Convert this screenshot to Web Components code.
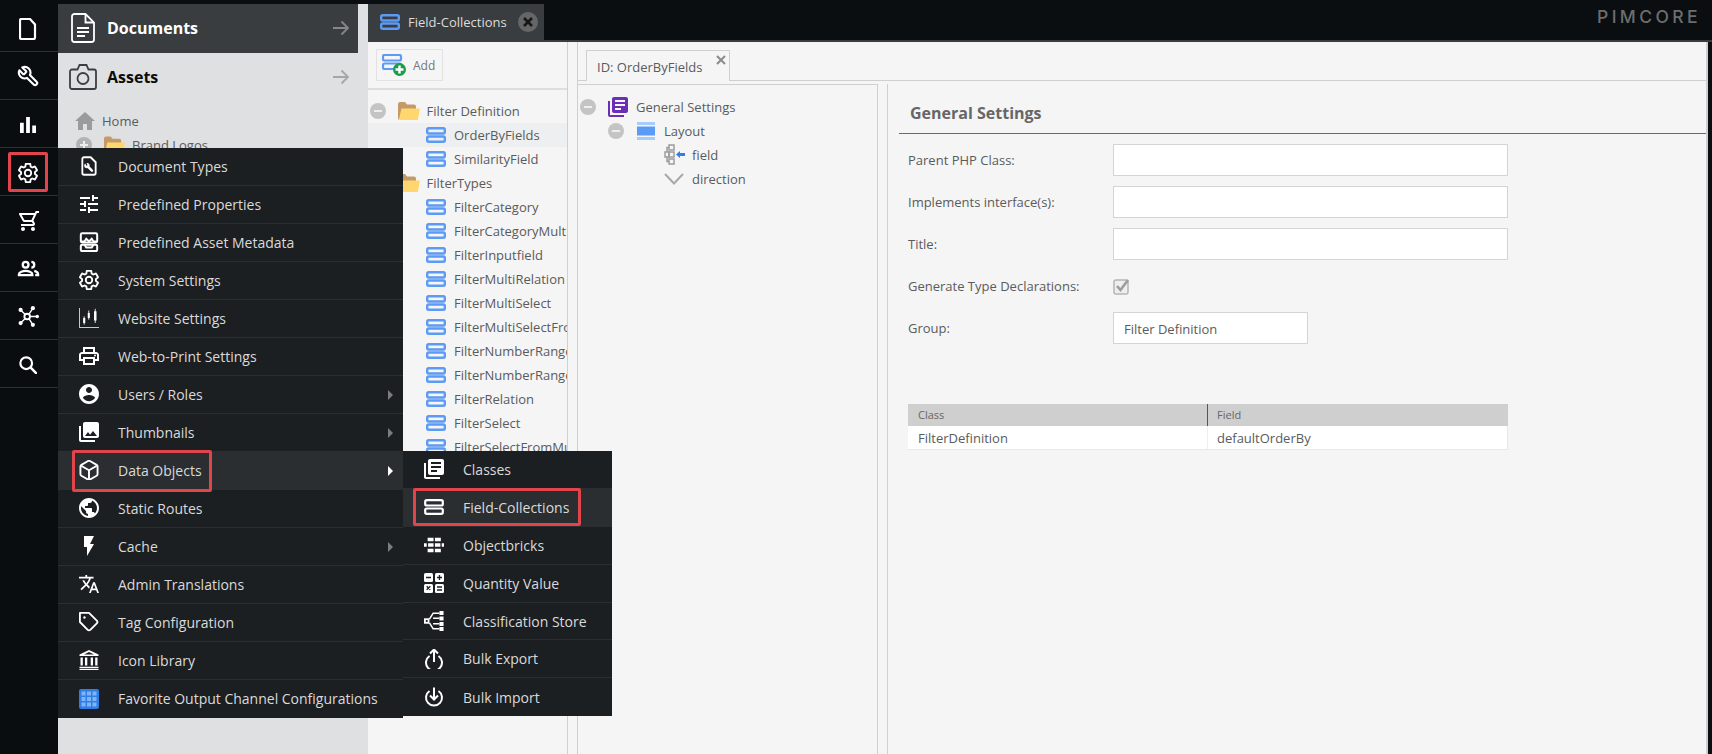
<!DOCTYPE html>
<html lang="en">
<head>
<meta charset="utf-8">
<title>Field-Collections</title>
<style>
  html, body { margin: 0; height: 100%; overflow: hidden; background: #0b0e11; }
  body { font-family: "Open Sans", "DejaVu Sans", sans-serif; font-size: 13px; }
</style>
</head>
<body>
<pim-app>
  <pim-sidebar>
    <pim-side-button icon="file" w="18" h="22"></pim-side-button>
    <pim-side-button icon="wrench" w="23" h="23"></pim-side-button>
    <pim-side-button icon="bars" w="16" h="16"></pim-side-button>
    <pim-side-button icon="gear" w="20" h="20" marked></pim-side-button>
    <pim-side-button icon="cart" w="24" h="24"></pim-side-button>
    <pim-side-button icon="people" w="23" h="23"></pim-side-button>
    <pim-side-button icon="network" w="21" h="21"></pim-side-button>
    <pim-side-button icon="search" w="18" h="18"></pim-side-button>
  </pim-sidebar>

  <pim-accordion>
    <pim-acc-header active icon="doc-lines" w="24" h="30">Documents</pim-acc-header>
    <pim-acc-header icon="camera" w="28" h="26">Assets</pim-acc-header>
    <pim-tree style="--tree-top:7.5px">
      <pim-tree-row at="16.5" text="44" icon="home" icon-w="20" icon-h="18">Home</pim-tree-row>
      <pim-tree-row toggle="plus" toggle-at="18" at="46" text="74" icon="folder" icon-w="21" icon-h="18">Brand Logos</pim-tree-row>
    </pim-tree>
  </pim-accordion>

  <pim-workspace>
    <pim-main-tab slot="tabs" icon="collection">Field-Collections</pim-main-tab>
    <pim-logo slot="tabs">PIMCORE</pim-logo>

    <pim-split>
      <pim-nav-panel slot="nav">
        <pim-tree style="--tree-top:8.5px">
          <pim-tree-row toggle="minus" toggle-at="2" at="30" text="58.5" icon="folder" icon-w="22" icon-h="18">Filter Definition</pim-tree-row>
          <pim-tree-row selected at="58" text="86" icon="collection">OrderByFields</pim-tree-row>
          <pim-tree-row at="58" text="86" icon="collection">SimilarityField</pim-tree-row>
          <pim-tree-row toggle="minus" toggle-at="2" at="30" text="58.5" icon="folder" icon-w="22" icon-h="18">FilterTypes</pim-tree-row>
          <pim-tree-row at="58" text="86" icon="collection">FilterCategory</pim-tree-row>
          <pim-tree-row at="58" text="86" icon="collection">FilterCategoryMultiselect</pim-tree-row>
          <pim-tree-row at="58" text="86" icon="collection">FilterInputfield</pim-tree-row>
          <pim-tree-row at="58" text="86" icon="collection">FilterMultiRelation</pim-tree-row>
          <pim-tree-row at="58" text="86" icon="collection">FilterMultiSelect</pim-tree-row>
          <pim-tree-row at="58" text="86" icon="collection">FilterMultiSelectFromMultiSelect</pim-tree-row>
          <pim-tree-row at="58" text="86" icon="collection">FilterNumberRange</pim-tree-row>
          <pim-tree-row at="58" text="86" icon="collection">FilterNumberRangeSelection</pim-tree-row>
          <pim-tree-row at="58" text="86" icon="collection">FilterRelation</pim-tree-row>
          <pim-tree-row at="58" text="86" icon="collection">FilterSelect</pim-tree-row>
          <pim-tree-row at="58" text="86" icon="collection">FilterSelectFromMultiSelect</pim-tree-row>
        </pim-tree>
      </pim-nav-panel>

      <pim-detail slot="detail" heading="ID: OrderByFields">
        <pim-tree slot="layout" style="--tree-top:9.5px">
          <pim-tree-row toggle="minus" toggle-at="2" at="30" text="58" icon="classes" icon-w="20" icon-h="20" icon-color="#6a2fb4">General Settings</pim-tree-row>
          <pim-tree-row toggle="minus" toggle-at="30" at="59" text="86" icon="layout" icon-w="18" icon-h="18">Layout</pim-tree-row>
          <pim-tree-row at="86" text="114" icon="field-tree" icon-w="21" icon-h="21">field</pim-tree-row>
          <pim-tree-row at="86" text="114" icon="chevron" icon-w="20" icon-h="12">direction</pim-tree-row>
        </pim-tree>
        <pim-settings slot="settings" heading="General Settings">
          <pim-field label="Parent PHP Class:"></pim-field>
          <pim-field label="Implements interface(s):"></pim-field>
          <pim-field label="Title:"></pim-field>
          <pim-field label="Generate Type Declarations:" type="check"></pim-field>
          <pim-field label="Group:" value="Filter Definition" width="195"></pim-field>
          <pim-usage-table class-name="FilterDefinition" field="defaultOrderBy"></pim-usage-table>
        </pim-settings>
      </pim-detail>
    </pim-split>
  </pim-workspace>

  <pim-menu style="--x:58px;--y:147.6px;--w:345px;--row:38px">
    <pim-menu-item icon="doc-wrench">Document Types</pim-menu-item>
    <pim-menu-item icon="tune">Predefined Properties</pim-menu-item>
    <pim-menu-item icon="metadata">Predefined Asset Metadata</pim-menu-item>
    <pim-menu-item icon="gear">System Settings</pim-menu-item>
    <pim-menu-item icon="candles">Website Settings</pim-menu-item>
    <pim-menu-item icon="print">Web-to-Print Settings</pim-menu-item>
    <pim-menu-item icon="user" arrow>Users / Roles</pim-menu-item>
    <pim-menu-item icon="photos" arrow>Thumbnails</pim-menu-item>
    <pim-menu-item icon="cube" arrow active marked style="--mark-l:14px;--mark-w:140px;--mark-t:-2px;--mark-b:-3px">Data Objects</pim-menu-item>
    <pim-menu-item icon="globe">Static Routes</pim-menu-item>
    <pim-menu-item icon="bolt" arrow>Cache</pim-menu-item>
    <pim-menu-item icon="translate">Admin Translations</pim-menu-item>
    <pim-menu-item icon="tag">Tag Configuration</pim-menu-item>
    <pim-menu-item icon="bank">Icon Library</pim-menu-item>
    <pim-menu-item icon="grid" last>Favorite Output Channel Configurations</pim-menu-item>
  </pim-menu>

  <pim-menu style="--x:403px;--y:451px;--w:209px;--row:37.9px">
    <pim-menu-item icon="classes">Classes</pim-menu-item>
    <pim-menu-item icon="rows" active marked style="--mark-l:10px;--mark-w:168px;--mark-t:-1px;--mark-b:0px">Field-Collections</pim-menu-item>
    <pim-menu-item icon="bricks">Objectbricks</pim-menu-item>
    <pim-menu-item icon="calc">Quantity Value</pim-menu-item>
    <pim-menu-item icon="hierarchy">Classification Store</pim-menu-item>
    <pim-menu-item icon="export">Bulk Export</pim-menu-item>
    <pim-menu-item icon="import" last>Bulk Import</pim-menu-item>
  </pim-menu>
</pim-app>

<script>
// icon bodies, keyed by name: [viewBox, markup]
const GEAR = "M19.43 12.98c.04-.32.07-.64.07-.98 0-.34-.03-.66-.07-.98l2.11-1.65c.19-.15.24-.42.12-.64l-2-3.46c-.12-.22-.39-.3-.61-.22l-2.49 1c-.52-.4-1.08-.73-1.69-.98l-.38-2.65C14.46 2.18 14.25 2 14 2h-4c-.25 0-.46.18-.49.42l-.38 2.65c-.61.25-1.17.59-1.69.98l-2.49-1c-.23-.09-.49 0-.61.22l-2 3.46c-.13.22-.07.49.12.64l2.11 1.65c-.04.32-.07.65-.07.98 0 .33.03.66.07.98l-2.11 1.65c-.19.15-.24.42-.12.64l2 3.46c.12.22.39.3.61.22l2.49-1c.52.4 1.08.73 1.69.98l.38 2.65c.03.24.24.42.49.42h4c.25 0 .46-.18.49-.42l.38-2.65c.61-.25 1.17-.59 1.69-.98l2.49 1c.23.09.49 0 .61-.22l2-3.46c.12-.22.07-.49-.12-.64l-2.11-1.65zM12 15.5c-1.93 0-3.5-1.57-3.5-3.5s1.57-3.5 3.5-3.5 3.5 1.57 3.5 3.5-1.57 3.5-3.5 3.5z";
const ROWS = (color, width) => `<g fill="none" stroke="${color}" stroke-width="${width}"><rect x="1.200" y="1.200" width="17.600" height="5.300" rx="1.500"/><rect x="1.200" y="9.500" width="17.600" height="5.300" rx="1.500"/></g>`;
const ICONS = {
  file: ["0 0 18 22", `<path d="M2.500 1h8.500l5 5.500v13a1.500 1.500 0 0 1-1.500 1.500h-12a1.500 1.500 0 0 1-1.500-1.500v-17a1.500 1.500 0 0 1 1.500-1.500z" fill="none" stroke="currentColor" stroke-width="2.200"/>`],
  wrench: ["0 0 24 24", `<g transform="matrix(-1 0 0 1 24 0)"><path d="M14.700 6.300a1 1 0 0 0 0 1.400l1.600 1.600a1 1 0 0 0 1.400 0l3.770-3.770a6 6 0 0 1-7.940 7.940l-6.910 6.910a2.120 2.120 0 0 1-3-3l6.910-6.910a6 6 0 0 1 7.940-7.940l-3.760 3.760z" fill="none" stroke="currentColor" stroke-width="2.200" stroke-linejoin="round"/></g>`],
  bars: ["0 0 17 17", `<path fill="currentColor" d="M0 6h4v11H0zM6.500 0h4v17h-4zM13 9h4v8h-4z"/>`],
  gear: ["1.200 1.200 21.600 21.600", `<path d="${GEAR}" fill="none" stroke="currentColor" stroke-width="2"/>`],
  cart: ["0 0 24 24", `<g transform="matrix(-1 0 0 1 24 0)"><path fill="currentColor" d="M15.550 13c.75 0 1.410-.41 1.750-1.030l3.580-6.490A.996.996 0 0 0 20.010 4H5.210l-.94-2H1v2h2l3.600 7.590-1.350 2.440C4.520 15.370 5.480 17 7 17h12v-2H7l1.100-2h7.450zM6.160 6h12.150l-2.760 5H8.530L6.160 6zM7 18c-1.100 0-1.990.9-1.990 2S5.900 22 7 22s2-.9 2-2-.9-2-2-2zm10 0c-1.100 0-1.990.9-1.990 2s.89 2 1.990 2 2-.9 2-2-.9-2-2-2z"/></g>`],
  people: ["0 0 24 24", `<g fill="none" stroke="currentColor" stroke-width="2.400"><circle cx="9" cy="8" r="3"/><path d="M2 19v-1c0-2.300 4.500-3.500 7-3.500s7 1.200 7 3.500v1z"/><path d="M15 5a3 3 0 0 1 0 6"/><path d="M18 14.500c2.200.6 4 1.600 4 3.500v1h-3"/></g>`],
  network: ["0 0 24 24", `<g stroke="currentColor" stroke-width="1.600" fill="none"><circle cx="10.500" cy="12" r="3.200" stroke-width="2.200"/><path d="M3 4.500l5 5M17 2.500l-4.500 7M22 12h-8M17 21.500l-4.500-7M3 19.500l5-5"/></g><g fill="currentColor"><circle cx="3" cy="4.500" r="2.400"/><circle cx="17" cy="2.500" r="2.400"/><circle cx="22" cy="12" r="2"/><circle cx="17" cy="21.500" r="2.400"/><circle cx="3" cy="19.500" r="2.400"/></g>`],
  search: ["0 0 20 20", `<circle cx="8" cy="8" r="6.500" fill="none" stroke="currentColor" stroke-width="2.400"/><path d="M13 13l6 6" stroke="currentColor" stroke-width="2.800" stroke-linecap="round"/>`],
  "doc-lines": ["0 0 24 30", `<path d="M3.500 1h11l8.500 8.500v17a2.500 2.500 0 0 1-2.500 2.500h-17A2.500 2.500 0 0 1 1 26.500v-23A2.500 2.500 0 0 1 3.500 1z" fill="none" stroke="currentColor" stroke-width="1.800"/><path d="M14.500 1v8.500H23" fill="none" stroke="currentColor" stroke-width="1.800"/><path d="M6 15h12M6 19h12M6 23h8" stroke="currentColor" stroke-width="1.800"/>`],
  camera: ["0 0 28 26", `<path d="M3 5.500h5.500l2-4.500h7l2 4.500H25a2 2 0 0 1 2 2V23a2 2 0 0 1-2 2H3a2 2 0 0 1-2-2V7.500a2 2 0 0 1 2-2z" fill="none" stroke="currentColor" stroke-width="1.800"/><circle cx="14" cy="14.500" r="5.500" fill="none" stroke="currentColor" stroke-width="1.800"/>`],
  home: ["0 0 20 18", `<path fill="#9a9b9c" d="M10 0L0 9h3v9h5v-6h4v6h5V9h3z"/>`],
  folder: ["0 0 22 18", `<path fill="#c49b68" d="M0 2a2 2 0 0 1 2-2h5l2 2.500h7a2 2 0 0 1 2 2V16H1.500L0 18z"/><path fill="#ffd76e" d="M3.500 6.500h18.500l-2.200 11.500H.8z"/>`],
  collection: ["0 0 20 16", ROWS("#5b9bf5", 2.400)],
  rows: ["0 0 20 16", ROWS("currentColor", 2.200)],
  "collection-add": ["0 0 24 22", `<g fill="none" stroke="#5b9bf5" stroke-width="2.200"><rect x="1" y="1" width="18" height="5.500" rx="1.500"/><rect x="1" y="9.500" width="18" height="5.500" rx="1.500"/></g><circle cx="17.500" cy="15.500" r="6.500" fill="#1d9a4b"/><path d="M17.500 11.500v8M13.500 15.500h8" stroke="#fff" stroke-width="2.400"/>`],
  classes: ["2 2 20 20", `<path fill="currentColor" d="M4 6H2v14c0 1.100.9 2 2 2h14v-2H4V6zm16-4H8c-1.100 0-2 .9-2 2v12c0 1.100.9 2 2 2h12c1.100 0 2-.9 2-2V4c0-1.100-.9-2-2-2zm-1 9H9V9h10v2zm-4 4H9v-2h6v2zm4-8H9V5h10v2z"/>`],
  layout: ["0 0 18 18", `<path fill="#a9cbfa" d="M0 0h18v3H0zM0 15h18v3H0z"/><path fill="#5b9bf5" d="M0 4.500h18v9H0z"/>`],
  "field-tree": ["0 0 21 21", `<g fill="none" stroke="#9c9c9c" stroke-width="1.500"><rect x="1" y="8" width="4" height="5"/><rect x="5" y="1" width="5" height="5"/><rect x="5" y="8" width="5" height="5"/><rect x="5" y="15" width="5" height="5"/><path d="M3 8V3.500h2M3 13v4.500h2"/></g><path fill="#2f7fe8" d="M12 10.500l4-3.500v2h5v3h-5v2z"/>`],
  chevron: ["0 0 20 12", `<path d="M1 1l9 9.500L19 1" fill="none" stroke="#a8a8a8" stroke-width="2"/>`],
  "doc-wrench": ["0 0 24 24", `<path d="M6 1.500h8l6 6v13a2 2 0 0 1-2 2H6a2 2 0 0 1-2-2v-17a2 2 0 0 1 2-2z" fill="none" stroke="currentColor" stroke-width="2.200"/><path d="M9.500 11.500l6 6" stroke="currentColor" stroke-width="3" stroke-linecap="round"/><circle cx="9.500" cy="11.500" r="3.200" fill="currentColor"/><path d="M9.500 11.500L8 8" stroke="#1c1f22" stroke-width="1.500"/>`],
  tune: ["2 2 20 20", `<path fill="currentColor" d="M3 17v2h6v-2H3zM3 5v2h10V5H3zm10 16v-2h8v-2h-8v-2h-2v6h2zM7 9v2H3v2h4v2h2V9H7zm14 4v-2H11v2h10zm-6-4h2V7h4V5h-4V3h-2v6z"/>`],
  metadata: ["1 1 22 22", `<g fill="none" stroke="currentColor" stroke-width="2.200"><rect x="3" y="2.500" width="18" height="10" rx="1.500"/><rect x="3" y="15" width="18" height="7" rx="1.500"/><path d="M3 11.500h4l2-3 3 3 3-3 2 3h4M7 15l2 3h6l2-3"/></g>`],
  candles: ["0 0 24 24", `<path d="M.5 0v23.500H24" fill="none" stroke="currentColor" stroke-width="1"/><g fill="currentColor"><path d="M5 12h2.500v6H5zM10.500 6h2.500v6h-2.500zM18 4h3v11h-3z"/></g><path d="M6.200 10v10M11.700 3v11M19.500 1v17" stroke="currentColor" stroke-width="1"/>`],
  print: ["2 2 20 20", `<path fill="currentColor" d="M19 8h-1V3H6v5H5c-1.660 0-3 1.340-3 3v6h4v4h12v-4h4v-6c0-1.660-1.340-3-3-3zM8 5h8v3H8V5zm8 12v2H8v-4h8v2zm2-2v-2H6v2H4v-4c0-.55.45-1 1-1h14c.55 0 1 .45 1 1v4h-2z"/><circle cx="18" cy="11.500" r="1" fill="currentColor"/>`],
  user: ["2 2 20 20", `<path fill="currentColor" d="M12 2C6.480 2 2 6.480 2 12s4.480 10 10 10 10-4.480 10-10S17.520 2 12 2zm0 3c1.660 0 3 1.340 3 3s-1.340 3-3 3-3-1.340-3-3 1.340-3 3-3zm0 14.200c-2.500 0-4.710-1.280-6-3.220.03-1.990 4-3.080 6-3.080 1.990 0 5.970 1.090 6 3.080-1.290 1.940-3.500 3.220-6 3.220z"/>`],
  photos: ["2 2 20 20", `<path fill="currentColor" d="M22 16V4c0-1.100-.9-2-2-2H8c-1.100 0-2 .9-2 2v12c0 1.100.9 2 2 2h12c1.100 0 2-.9 2-2zm-11-4l2.030 2.710L16 11l4 5H8l3-4zM2 6v14c0 1.100.9 2 2 2h14v-2H4V6H2z"/>`],
  cube: ["1.500 1.200 21 21", `<g fill="none" stroke="currentColor" stroke-width="2" stroke-linejoin="round"><path d="M21 16V8a2 2 0 0 0-1-1.730l-7-4a2 2 0 0 0-2 0l-7 4A2 2 0 0 0 3 8v8a2 2 0 0 0 1 1.730l7 4a2 2 0 0 0 2 0l7-4A2 2 0 0 0 21 16z"/><path d="M3.270 6.960L12 12.010l8.730-5.050M12 22.080V12"/></g>`],
  globe: ["2 2 20 20", `<path fill="currentColor" d="M12 2C6.480 2 2 6.480 2 12s4.480 10 10 10 10-4.480 10-10S17.520 2 12 2zm-1 17.930c-3.950-.49-7-3.850-7-7.930 0-.62.08-1.210.21-1.790L9 15v1c0 1.100.9 2 2 2v1.930zm6.900-2.540c-.26-.81-1-1.390-1.900-1.390h-1v-3c0-.55-.45-1-1-1H8v-2h2c.55 0 1-.45 1-1V7h2c1.100 0 2-.9 2-2v-.41c2.930 1.190 5 4.060 5 7.410 0 2.080-.8 3.970-2.100 5.390z"/>`],
  bolt: ["2 2 20 20", `<path fill="currentColor" d="M7 2v11h3v9l7-12h-4l4-8z"/>`],
  translate: ["1 2 22 20", `<path fill="currentColor" d="M12.870 15.070l-2.540-2.510.03-.03c1.740-1.940 2.980-4.170 3.710-6.530H17V4h-7V2H8v2H1v1.990h11.170C11.500 7.920 10.440 9.750 9 11.350 8.070 10.320 7.300 9.190 6.690 8h-2c.73 1.630 1.730 3.170 2.980 4.560l-5.090 5.020L4 19l5-5 3.110 3.110.76-2.040zM18.500 10h-2L12 22h2l1.120-3h4.750L21 22h2l-4.500-12zm-2.620 7l1.620-4.330L19.120 17h-3.240z"/>`],
  tag: ["1 1 22 22", `<path d="M20.590 13.410l-7.170 7.170a2 2 0 0 1-2.830 0L2 12V2h10l8.590 8.590a2 2 0 0 1 0 2.820z" fill="none" stroke="currentColor" stroke-width="2" stroke-linejoin="round"/><circle cx="7" cy="7" r="1.300" fill="currentColor"/>`],
  bank: ["0 0 20 20", `<path fill="currentColor" d="M10 0L.5 4.500V6h19V4.500zM10 2l5 2.500H5zM1.500 7.500h2.300v8H1.500zM6 7.500h2.300v8H6zM11.700 7.500H14v8h-2.300zM16.200 7.500h2.300v8h-2.300zM.5 16.800h19v1.300H.5zM.5 18.700h19V20H.5z"/>`],
  grid: ["0 0 20 20", `<rect width="20" height="20" rx="2" fill="#2f7de6"/><g fill="#7fb3f6"><rect x="2.500" y="2.500" width="4" height="4"/><rect x="8" y="2.500" width="4" height="4"/><rect x="13.500" y="2.500" width="4" height="4"/><rect x="2.500" y="8" width="4" height="4"/><rect x="8" y="8" width="4" height="4"/><rect x="13.500" y="8" width="4" height="4"/><rect x="2.500" y="13.500" width="4" height="4"/><rect x="8" y="13.500" width="4" height="4"/><rect x="13.500" y="13.500" width="4" height="4"/></g>`],
  bricks: ["0 0 22 22", `<path fill="currentColor" d="M4 3h6.500v4H4zM12 3h6.500v4H12zM0 9h3v4H0zM4.500 9h6v4h-6zM12 9h6v4h-6zM19.500 9H22v4h-2.500zM4 15h6.500v4H4zM12 15h6.500v4H12z"/>`],
  calc: ["0 0 20 20", `<g fill="currentColor"><rect width="9" height="9" rx="1.500"/><rect x="11" width="9" height="9" rx="1.500"/><rect y="11" width="9" height="9" rx="1.500"/><rect x="11" y="11" width="9" height="9" rx="1.500"/></g><path d="M2 4.500h5M13 4.500h5M15.500 2v5M2.700 13.200l3.600 3.600M6.300 13.200l-3.600 3.600M13 14h5M13 17h5" stroke="#1c1f22" stroke-width="1.300"/>`],
  hierarchy: ["0 0 22 22", `<g fill="currentColor"><path d="M0 8h6v6H0z"/><path d="M17 0h4.500v4.500H17zM17 6h4.500v4.500H17zM17 12h4.500v4.500H17zM17 17.500h4.500V22H17z"/></g><rect x="2" y="10" width="2" height="2" fill="#1c1f22"/><path d="M6 9l4-6.500h7M6 13l4 6.500h7M10 8h7M10 14h7" fill="none" stroke="currentColor" stroke-width="1.600"/>`],
  export: ["2 1 20 20", `<g fill="none" stroke="currentColor" stroke-width="2"><path d="M7.500 8a8 8 0 1 0 9 0"/><path d="M12 14V1.500M8 5.500l4-4 4 4"/></g>`],
  import: ["2 2 20 20", `<g fill="none" stroke="currentColor" stroke-width="2"><path d="M7.500 6a8 8 0 1 0 9 0"/><path d="M12 2.500v12M8 10.500l4 4 4-4"/></g>`],
};

class PimIcon extends HTMLElement {
  constructor() {
    super();
    this.attachShadow({ mode: "open" });
  }

  connectedCallback() {
    const [viewBox, body] = ICONS[this.getAttribute("name")];
    const w = this.getAttribute("w") || 20;
    const h = this.getAttribute("h") || w;
    this.shadowRoot.innerHTML = `
      <style>
        :host { display: inline-flex; flex: none; }
        svg { display: block; }
      </style>
      <svg xmlns="http://www.w3.org/2000/svg" width="${w}" height="${h}" viewBox="${viewBox}">${body}</svg>
    `;
  }
}

class PimApp extends HTMLElement {
  constructor() {
    super();
    this.attachShadow({ mode: "open" });
    this.shadowRoot.innerHTML = `
      <style>
        :host {
          display: grid;
          grid-template-columns: 58px 310px 1fr;
          height: 100vh;
          position: relative;
          overflow: hidden;
          background: #0b0e11;
        }
      </style>
      <slot></slot>
    `;
  }
}

class PimSidebar extends HTMLElement {
  constructor() {
    super();
    this.attachShadow({ mode: "open" });
    this.shadowRoot.innerHTML = `
      <style>
        :host {
          display: flex;
          flex-direction: column;
          padding-top: 4px;
          background: #0a0d10;
        }
      </style>
      <slot></slot>
    `;
  }
}

class PimSideButton extends HTMLElement {
  constructor() {
    super();
    this.attachShadow({ mode: "open" });
  }

  connectedCallback() {
    this.shadowRoot.innerHTML = `
      <style>
        :host {
          display: flex;
          align-items: center;
          justify-content: center;
          position: relative;
          height: 48px;
          box-sizing: border-box;
          padding: 2px 2px 0 0;
          border-bottom: 1px solid #2c3033;
          color: #fff;
        }
        :host([marked])::after {
          content: "";
          position: absolute;
          left: 8px;
          right: 10px;
          top: 4px;
          bottom: 3px;
          border: 3px solid #e2444c;
          border-radius: 2px;
        }
      </style>
      <pim-icon name="${this.getAttribute("icon")}" w="${this.getAttribute("w")}" h="${this.getAttribute("h")}"></pim-icon>
    `;
  }
}

class PimAccordion extends HTMLElement {
  constructor() {
    super();
    this.attachShadow({ mode: "open" });
    this.shadowRoot.innerHTML = `
      <style>
        :host {
          display: block;
          background: #dfe0e2;
          border-top: 4px solid #0b0e11;
          overflow: hidden;
        }
      </style>
      <slot></slot>
    `;
  }
}

class PimAccHeader extends HTMLElement {
  constructor() {
    super();
    this.attachShadow({ mode: "open" });
  }

  connectedCallback() {
    const active = this.hasAttribute("active");
    this.shadowRoot.innerHTML = `
      <style>
        :host {
          display: flex;
          align-items: center;
          box-sizing: border-box;
          width: 300px;
          height: 48.500px;
          padding-left: ${active ? 13 : 11}px;
          font-size: 16px;
          font-weight: 700;
          color: ${active ? "#fff" : "#0c0c0c"};
          background: ${active ? "#3a3d40" : "transparent"};
        }
        .label { flex: 1; margin-left: ${active ? 12 : 10}px; }
        pim-icon { color: ${active ? "#fff" : "#3c3f42"}; }
        svg { margin-right: 9px; display: block; }
      </style>
      <pim-icon name="${this.getAttribute("icon")}" w="${this.getAttribute("w")}" h="${this.getAttribute("h")}"></pim-icon>
      <span class="label"><slot></slot></span>
      <svg width="16" height="16" viewBox="0 0 16 16" fill="none" stroke="${active ? "#85878a" : "#a5a6a8"}" stroke-width="1.800"><path d="M0 8h15M8.500 1.500L15 8l-6.500 6.500"/></svg>
    `;
  }
}

class PimTree extends HTMLElement {
  constructor() {
    super();
    this.attachShadow({ mode: "open" });
    this.shadowRoot.innerHTML = `
      <style>
        :host {
          display: block;
          padding-top: var(--tree-top, 0);
          overflow: hidden;
        }
      </style>
      <slot></slot>
    `;
  }
}

class PimTreeRow extends HTMLElement {
  constructor() {
    super();
    this.attachShadow({ mode: "open" });
  }

  connectedCallback() {
    const at = parseFloat(this.getAttribute("at"));
    const textAt = parseFloat(this.getAttribute("text"));
    const toggle = this.getAttribute("toggle");
    const toggleAt = this.getAttribute("toggle-at") || 0;
    const iconColor = this.getAttribute("icon-color") || "inherit";
    const mark = toggle === "plus"
      ? `<path d="M4 8h8M8 4v8" stroke="#eee" stroke-width="2"/>`
      : `<path d="M4 8h8" stroke="#eee" stroke-width="2"/>`;
    this.shadowRoot.innerHTML = `
      <style>
        :host {
          display: flex;
          align-items: center;
          height: 24px;
          font-size: 13px;
          color: #595b5d;
          white-space: nowrap;
          background: var(--row-bg, transparent);
        }
        :host([selected]) { background: #eeeff1; }
        .lead { flex: none; display: flex; width: ${at}px; box-sizing: border-box; padding-left: ${toggleAt}px; }
        .icon { flex: none; display: flex; align-items: center; width: ${textAt - at}px; color: ${iconColor}; }
        svg { display: block; }
      </style>
      <span class="lead">${toggle ? `<svg width="16" height="16" viewBox="0 0 16 16"><circle cx="8" cy="8" r="8" fill="${toggle === "plus" ? "#b2b3b5" : "#c4c4c4"}"/>${mark}</svg>` : ""}</span>
      <span class="icon"><pim-icon name="${this.getAttribute("icon")}" w="${this.getAttribute("icon-w") || 20}" h="${this.getAttribute("icon-h") || 16}"></pim-icon></span>
      <span><slot></slot></span>
    `;
  }
}

class PimWorkspace extends HTMLElement {
  constructor() {
    super();
    this.attachShadow({ mode: "open" });
    this.shadowRoot.innerHTML = `
      <style>
        :host {
          display: flex;
          flex-direction: column;
          min-width: 0;
          padding-right: 4px;
          background: #0b0e11;
        }
        header {
          display: flex;
          box-sizing: border-box;
          height: 42px;
          padding-top: 4px;
          margin-right: -4px;
          border-bottom: 2px solid #3a3d40;
        }
        main { flex: 1; min-height: 0; display: flex; }
      </style>
      <header><slot name="tabs"></slot></header>
      <main><slot></slot></main>
    `;
  }
}

class PimMainTab extends HTMLElement {
  constructor() {
    super();
    this.attachShadow({ mode: "open" });
  }

  connectedCallback() {
    this.shadowRoot.innerHTML = `
      <style>
        :host {
          display: flex;
          align-items: center;
          box-sizing: border-box;
          width: 176px;
          height: 38px;
          padding: 0 6px 2px 12px;
          gap: 8px;
          background: #3a3d40;
          color: #dcdcdc;
          font-size: 13px;
          white-space: nowrap;
        }
        .label { flex: 1; }
        svg { display: block; flex: none; }
      </style>
      <pim-icon name="${this.getAttribute("icon")}" w="20" h="16"></pim-icon>
      <span class="label"><slot></slot></span>
      <svg width="20" height="20" viewBox="0 0 20 20"><circle cx="10" cy="10" r="10" fill="#666"/><path d="M6 6l8 8M14 6l-8 8" stroke="#15181a" stroke-width="2.600"/></svg>
    `;
  }
}

class PimLogo extends HTMLElement {
  constructor() {
    super();
    this.attachShadow({ mode: "open" });
    this.shadowRoot.innerHTML = `
      <style>
        :host {
          display: block;
          margin-left: auto;
          margin-right: 11px;
          margin-top: 3px;
          height: 20px;
          line-height: 20px;
          font-family: "Inter", "Liberation Sans", sans-serif;
          font-size: 17.500px;
          font-weight: 500;
          letter-spacing: 3.400px;
          color: #6b6e70;
        }
      </style>
      <slot></slot>
    `;
  }
}

class PimSplit extends HTMLElement {
  constructor() {
    super();
    this.attachShadow({ mode: "open" });
    this.shadowRoot.innerHTML = `
      <style>
        :host {
          flex: 1;
          min-width: 0;
          display: grid;
          grid-template-columns: 200px 1fr;
          column-gap: 9px;
          background: #f5f5f5;
          border-right: 2px solid #cfcfcf;
        }
      </style>
      <slot name="nav"></slot>
      <slot name="detail"></slot>
    `;
  }
}

class PimNavPanel extends HTMLElement {
  constructor() {
    super();
    this.attachShadow({ mode: "open" });
    this.shadowRoot.innerHTML = `
      <style>
        :host {
          display: block;
          min-width: 0;
          overflow: hidden;
          border-right: 1px solid #cfcfcf;
        }
        .toolbar {
          display: flex;
          box-sizing: border-box;
          height: 48px;
          padding: 7px 0 0 8px;
          border-bottom: 2px solid #dedede;
        }
        .add {
          display: flex;
          align-items: center;
          box-sizing: border-box;
          width: 67px;
          height: 32px;
          padding-left: 5px;
          gap: 7px;
          border: 1px solid #e2e2e2;
          font-size: 12px;
          color: #777;
        }
      </style>
      <div class="toolbar">
        <div class="add"><pim-icon name="collection-add" w="24" h="22"></pim-icon>Add</div>
      </div>
      <slot></slot>
    `;
  }
}

class PimDetail extends HTMLElement {
  constructor() {
    super();
    this.attachShadow({ mode: "open" });
  }

  connectedCallback() {
    this.shadowRoot.innerHTML = `
      <style>
        :host {
          display: flex;
          flex-direction: column;
          min-width: 0;
          border-left: 1px solid #cfcfcf;
        }
        .tabs {
          display: flex;
          align-items: flex-end;
          box-sizing: border-box;
          height: 39px;
          padding-left: 8px;
          border-bottom: 1px solid #cfcfcf;
        }
        .tab {
          display: flex;
          align-items: center;
          justify-content: space-between;
          box-sizing: border-box;
          width: 144px;
          height: 31px;
          margin-bottom: -1px;
          padding: 2px 3px 0 10px;
          background: #f5f5f5;
          border: 1px solid #cfcfcf;
          border-bottom: 0;
          font-size: 13px;
          color: #595b5d;
        }
        .tab svg { align-self: flex-start; margin-top: 2px; }
        .body {
          flex: 1;
          min-height: 0;
          display: grid;
          grid-template-columns: 300px 1fr;
          column-gap: 9px;
          padding-top: 3px;
        }
        .layout {
          border-top: 1px solid #cfcfcf;
          border-right: 1px solid #cfcfcf;
        }
        .settings { border-left: 1px solid #cfcfcf; min-width: 0; }
      </style>
      <div class="tabs">
        <div class="tab"><span>${this.getAttribute("heading")}</span>
          <svg width="10" height="10" viewBox="0 0 10 10"><path d="M1 1l8 8M9 1L1 9" stroke="#8a8a8a" stroke-width="2"/></svg>
        </div>
      </div>
      <div class="body">
        <div class="layout"><slot name="layout"></slot></div>
        <div class="settings"><slot name="settings"></slot></div>
      </div>
    `;
  }
}

class PimSettings extends HTMLElement {
  constructor() {
    super();
    this.attachShadow({ mode: "open" });
  }

  connectedCallback() {
    this.shadowRoot.innerHTML = `
      <style>
        :host { display: block; }
        h2 {
          margin: 0 0 0 11px;
          box-sizing: border-box;
          height: 50px;
          padding: 17px 0 0 11px;
          font-size: 16px;
          line-height: 24px;
          font-weight: 700;
          color: #646668;
          border-bottom: 1px solid #6a6a6a;
        }
        .form {
          display: flex;
          flex-direction: column;
          gap: 10px;
          padding: 10px 0 0 20px;
        }
      </style>
      <h2>${this.getAttribute("heading")}</h2>
      <div class="form"><slot></slot></div>
    `;
  }
}

class PimField extends HTMLElement {
  constructor() {
    super();
    this.attachShadow({ mode: "open" });
  }

  connectedCallback() {
    const control = this.getAttribute("type") === "check"
      ? `<svg width="17" height="17" viewBox="0 0 17 17"><rect x="1" y="2" width="14" height="14" rx="2" fill="#eee" stroke="#b5b5b5" stroke-width="1.500"/><path d="M4 8l3.500 4L15 2" fill="none" stroke="#9c9c9c" stroke-width="2.600"/></svg>`
      : `<div class="box" style="width:${this.getAttribute("width") || 395}px">${this.getAttribute("value") || ""}</div>`;
    this.shadowRoot.innerHTML = `
      <style>
        :host {
          display: flex;
          align-items: center;
          height: 32px;
          font-size: 13px;
          color: #595b5d;
        }
        label { flex: none; width: 205px; }
        .box {
          box-sizing: border-box;
          height: 32px;
          line-height: 32px;
          padding-left: 10px;
          background: #fff;
          border: 1px solid #d4d4d4;
        }
        svg { display: block; }
      </style>
      <label>${this.getAttribute("label")}</label>
      ${control}
    `;
  }
}

class PimUsageTable extends HTMLElement {
  constructor() {
    super();
    this.attachShadow({ mode: "open" });
  }

  connectedCallback() {
    this.shadowRoot.innerHTML = `
      <style>
        :host {
          display: grid;
          grid-template-columns: 299px 1fr;
          width: 600px;
          margin-top: 50px;
          color: #595b5d;
        }
        .head {
          height: 22px;
          line-height: 22px;
          padding-left: 10px;
          font-size: 11px;
          background: #cfcfcf;
          color: #666;
        }
        .head + .head { border-left: 1px solid #555; padding-left: 9px; }
        .cell {
          height: 24px;
          line-height: 25px;
          padding-left: 10px;
          background: #fff;
          font-size: 13px;
          border-bottom: 1px solid #e8e8e8;
          box-sizing: border-box;
        }
        .cell + .cell { border-left: 1px solid #eee; padding-left: 9px; border-right: 1px solid #e8e8e8; }
      </style>
      <div class="head">Class</div><div class="head">Field</div>
      <div class="cell">${this.getAttribute("class-name")}</div>
      <div class="cell">${this.getAttribute("field")}</div>
    `;
  }
}

class PimMenu extends HTMLElement {
  constructor() {
    super();
    this.attachShadow({ mode: "open" });
    this.shadowRoot.innerHTML = `
      <style>
        :host {
          position: absolute;
          left: var(--x);
          top: var(--y);
          width: var(--w);
          display: flex;
          flex-direction: column;
          background: #1c1f22;
        }
      </style>
      <slot></slot>
    `;
  }
}

class PimMenuItem extends HTMLElement {
  constructor() {
    super();
    this.attachShadow({ mode: "open" });
  }

  connectedCallback() {
    const active = this.hasAttribute("active");
    this.shadowRoot.innerHTML = `
      <style>
        :host {
          display: flex;
          align-items: center;
          position: relative;
          box-sizing: border-box;
          height: var(--row);
          padding-left: 21px;
          gap: 19px;
          font-size: 14px;
          color: #dadada;
          white-space: nowrap;
          border-bottom: 1px solid #2c2f32;
        }
        :host([last]) { border-bottom: 0; }
        :host([active]) { background: #2b2e31; border-bottom-color: #2b2e31; }
        :host([marked])::after {
          content: "";
          position: absolute;
          left: var(--mark-l);
          width: var(--mark-w);
          top: var(--mark-t);
          bottom: var(--mark-b);
          box-sizing: border-box;
          border: 3px solid #e2444c;
          border-radius: 2px;
        }
        pim-icon { color: #fff; }
        .arrow {
          position: absolute;
          right: 10px;
          top: 14px;
          width: 0;
          height: 0;
          border-left: 5px solid ${active ? "#fff" : "#7a7c7e"};
          border-top: 5px solid transparent;
          border-bottom: 5px solid transparent;
        }
      </style>
      <pim-icon name="${this.getAttribute("icon")}" w="20" h="20"></pim-icon>
      <span><slot></slot></span>
      ${this.hasAttribute("arrow") ? `<span class="arrow"></span>` : ""}
    `;
  }
}

customElements.define("pim-icon", PimIcon);
customElements.define("pim-app", PimApp);
customElements.define("pim-sidebar", PimSidebar);
customElements.define("pim-side-button", PimSideButton);
customElements.define("pim-accordion", PimAccordion);
customElements.define("pim-acc-header", PimAccHeader);
customElements.define("pim-tree", PimTree);
customElements.define("pim-tree-row", PimTreeRow);
customElements.define("pim-workspace", PimWorkspace);
customElements.define("pim-main-tab", PimMainTab);
customElements.define("pim-logo", PimLogo);
customElements.define("pim-split", PimSplit);
customElements.define("pim-nav-panel", PimNavPanel);
customElements.define("pim-detail", PimDetail);
customElements.define("pim-settings", PimSettings);
customElements.define("pim-field", PimField);
customElements.define("pim-usage-table", PimUsageTable);
customElements.define("pim-menu", PimMenu);
customElements.define("pim-menu-item", PimMenuItem);
</script>
</body>
</html>
